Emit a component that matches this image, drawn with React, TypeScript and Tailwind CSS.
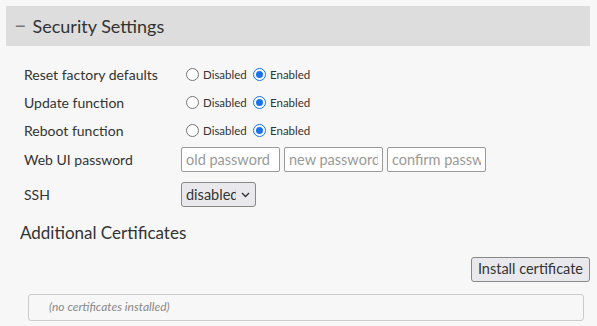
import { useState } from "react";

const font = { fontFamily: '"Lato", "Liberation Sans", sans-serif' };

function Radio({ checked }: { checked: boolean }) {
  return (
    <span
      className={`inline-flex h-[13px] w-[13px] items-center justify-center rounded-full border bg-white ${
        checked ? "border-[#1a73e8] border-[1.5px]" : "border-[#767676]"
      }`}
    >
      {checked && <span className="h-[7px] w-[7px] rounded-full bg-[#1a73e8]" />}
    </span>
  );
}

function Toggle() {
  return (
    <div className="flex items-center text-[11.5px] text-[#333]">
      <Radio checked={false} />
      <span className="ml-[4px] w-[50px]">Disabled</span>
      <Radio checked={true} />
      <span className="ml-[4px]">Enabled</span>
    </div>
  );
}

export default function App() {
  const [rows] = useState(["Reset factory defaults", "Update function", "Reboot function"]);
  return (
    <div className="min-h-screen bg-[#f7f7f7] pt-[6px] pl-[6px] pr-[7px] text-[#333]" style={font}>
      <div className="flex h-[40px] items-center bg-[#dddddd] pl-[9px] text-[18px]">
        <span className="mr-[7px] text-[#777]" style={{ fontFamily: '"Liberation Sans", sans-serif' }}>
          −
        </span>
        Security Settings
      </div>
      <div className="mt-[14px] pl-[18px] text-[14px]">
        {rows.map((r) => (
          <div key={r} className="flex h-[28px] items-center">
            <span className="w-[157px]">{r}</span>
            <div className="pl-[5px] pt-[1px]">
              <Toggle />
            </div>
          </div>
        ))}
        <div className="flex h-[30px] items-center">
          <span className="w-[157px]">Web UI password</span>
          <div className="flex gap-[4px]">
            {["old password", "new password", "confirm password"].map((p) => (
              <input
                key={p}
                placeholder={p}
                className="h-[25px] w-[99px] rounded-[2px] border border-[#999] bg-white px-[4px] text-[14.5px] placeholder:text-[#999]"
                style={font}
              />
            ))}
          </div>
        </div>
        <div className="mt-[4px] flex h-[33px] items-center">
          <span className="w-[157px]">SSH</span>
          <div className="flex h-[25px] w-[75px] items-center rounded-[3px] border border-[#888] bg-[#e9e9ed] pl-[4px] text-[14.5px]">
            <span className="w-[50px] overflow-hidden whitespace-nowrap">disabled</span>
            <svg width="9" height="6" viewBox="0 0 9 6" className="ml-[5px]">
              <path d="M1 1l3.5 3.5L8 1" fill="none" stroke="#333" strokeWidth="1.4" />
            </svg>
          </div>
        </div>
      </div>
      <div className="mt-[9px] pl-[14px] text-[17px]">Additional Certificates</div>
      <div className="mt-[11px] flex justify-end">
        <button
          className="h-[25px] rounded-[3px] border border-[#888] bg-[#e9e9ed] px-[6px] text-[14.5px] text-[#333]"
          style={font}
        >
          Install certificate
        </button>
      </div>
      <div className="mt-[12px] ml-[22px] mr-[6px] flex h-[27px] items-center rounded-[3px] border border-[#ccc] pl-[20px] text-[12px] italic text-[#888]">
        (no certificates installed)
      </div>
    </div>
  );
}
